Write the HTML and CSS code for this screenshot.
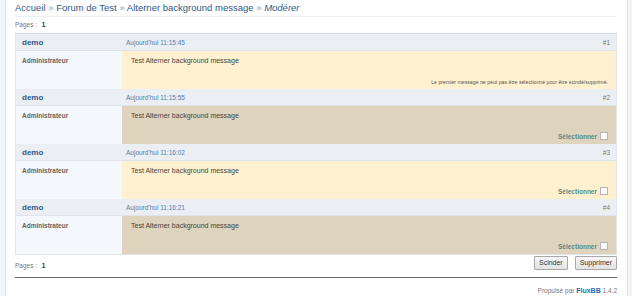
FILE: index.html
```html
<!DOCTYPE html>
<html>
<head>
  <title>Modérer - Forum de Test</title>
  <meta charset="utf-8">
  <link rel="stylesheet" href="styles.css">
</head>
<body>
  <div class="wrap">

    <div class="crumbs">
      <a href="#">Accueil</a> <span class="sep">»</span> <a href="#">Forum de Test</a> <span class="sep">»</span> <a href="#">Alterner background message</a> <span class="sep">»</span> <em>Modérer</em>
    </div>

    <div class="pages">Pages : <b>1</b></div>

    <div class="posts">
      <div class="post">
        <div class="post-head">
          <span class="author">demo</span>
          <span class="date">Aujourd'hui 11:15:45</span>
          <span class="num">#1</span>
        </div>
        <div class="post-body odd">
          <div class="left">Administrateur</div>
          <div class="right">
            <div class="msg">Test Alterner background message</div>
            <div class="note">Le premier message ne peut pas être sélectionné pour être scindé/supprimé.</div>
          </div>
        </div>
      </div>

      <div class="post">
        <div class="post-head">
          <span class="author">demo</span>
          <span class="date">Aujourd'hui 11:15:55</span>
          <span class="num">#2</span>
        </div>
        <div class="post-body even">
          <div class="left">Administrateur</div>
          <div class="right">
            <div class="msg">Test Alterner background message</div>
            <label class="select">Sélectionner <span class="box"></span></label>
          </div>
        </div>
      </div>

      <div class="post">
        <div class="post-head">
          <span class="author">demo</span>
          <span class="date">Aujourd'hui 11:16:02</span>
          <span class="num">#3</span>
        </div>
        <div class="post-body odd">
          <div class="left">Administrateur</div>
          <div class="right">
            <div class="msg">Test Alterner background message</div>
            <label class="select">Sélectionner <span class="box"></span></label>
          </div>
        </div>
      </div>

      <div class="post">
        <div class="post-head">
          <span class="author">demo</span>
          <span class="date">Aujourd'hui 11:16:21</span>
          <span class="num">#4</span>
        </div>
        <div class="post-body even">
          <div class="left">Administrateur</div>
          <div class="right">
            <div class="msg">Test Alterner background message</div>
            <label class="select">Sélectionner <span class="box"></span></label>
          </div>
        </div>
      </div>
    </div>

    <div class="bottom-bar">
      <div class="pages">Pages : <b>1</b></div>
      <div class="buttons">
        <button class="btn">Scinder</button>
        <button class="btn">Supprimer</button>
      </div>
    </div>

    <div class="footer">Propulsé par <a href="#">FluxBB</a> 1.4.2</div>

  </div>
</body>
</html>
```

FILE: styles.css
```css
* {
  margin: 0;
  padding: 0;
  box-sizing: border-box;
}

html, body {
  height: 100%;
}

body {
  background-color: #f2f5f8;
  font-family: "Liberation Sans", Arial, sans-serif;
  color: #555;
}

.wrap {
  margin: 0 4px 0 5px;
  min-height: 100%;
  background-color: #fff;
  border-left: 1px solid #dfe4ea;
  border-right: 1px solid #dfe4ea;
  padding: 0 10px 0 9px;
}

a {
  color: #2e5a86;
  text-decoration: none;
}

.crumbs {
  height: 17px;
  padding-top: 2px;
  border-bottom: 1px solid #eceff3;
  font-size: 9.5px;
  color: #2e5a86;
}

.crumbs .sep {
  color: #7a9cbd;
}

.crumbs em {
  font-style: italic;
}

.pages {
  height: 16px;
  line-height: 16px;
  font-size: 6.5px;
  color: #777;
}

.pages b {
  margin-left: 3px;
  color: #333;
}

.posts {
  border: 1px solid #dfe4ea;
  border-top-color: #d3d9e0;
}

.post-head {
  display: flex;
  align-items: center;
  height: 17px;
  background-color: #ebeff4;
  border-bottom: 1px solid #dfe4ea;
  padding: 0 6px;
}

.author {
  width: 101px;
  font-weight: bold;
  font-size: 8px;
  color: #2e5a86;
}

.date {
  flex: 1;
  padding-left: 3px;
  font-size: 6.5px;
  color: #4f7fb0;
}

.num {
  font-size: 6.5px;
  color: #777;
}

.post-body {
  display: flex;
  height: 38px;
}

.left {
  width: 106px;
  padding: 6px 6px;
  background-color: #f4f7fb;
  font-size: 6.5px;
  font-weight: bold;
  color: #666;
}

.right {
  flex: 1;
  display: flex;
  flex-direction: column;
  justify-content: space-between;
  padding: 6px 8px 4px 9px;
}

.odd .right {
  background-color: #fff1cf;
}

.even .right {
  background-color: #ded3bc;
}

.msg {
  font-size: 7px;
  color: #444;
}

.note {
  text-align: right;
  font-size: 5.2px;
  color: #555;
}

.select {
  display: flex;
  align-items: center;
  justify-content: flex-end;
  gap: 3px;
  font-size: 6.5px;
  font-weight: bold;
  color: #5f8a86;
}

.box {
  width: 8px;
  height: 8px;
  background-color: #fafafa;
  border: 1px solid #b5b5b5;
}

.bottom-bar {
  display: flex;
  justify-content: space-between;
  align-items: center;
  height: 23px;
  border-bottom: 1px solid #666;
}

.bottom-bar .pages {
  height: 14px;
  line-height: 14px;
}

.buttons {
  display: flex;
  gap: 7px;
  margin-bottom: 7px;
}

.btn {
  height: 14px;
  padding: 0 4px;
  font-family: "Liberation Sans", Arial, sans-serif;
  font-size: 7px;
  color: #333;
  background: linear-gradient(#f8f8f8, #e2e2e2);
  border: 1px solid #a9a9a9;
  border-radius: 1px;
}

.footer {
  padding-top: 9px;
  text-align: right;
  font-size: 6.5px;
  color: #777;
}

.footer a {
  font-weight: bold;
  font-size: 7px;
  color: #2e6ab0;
}
```
